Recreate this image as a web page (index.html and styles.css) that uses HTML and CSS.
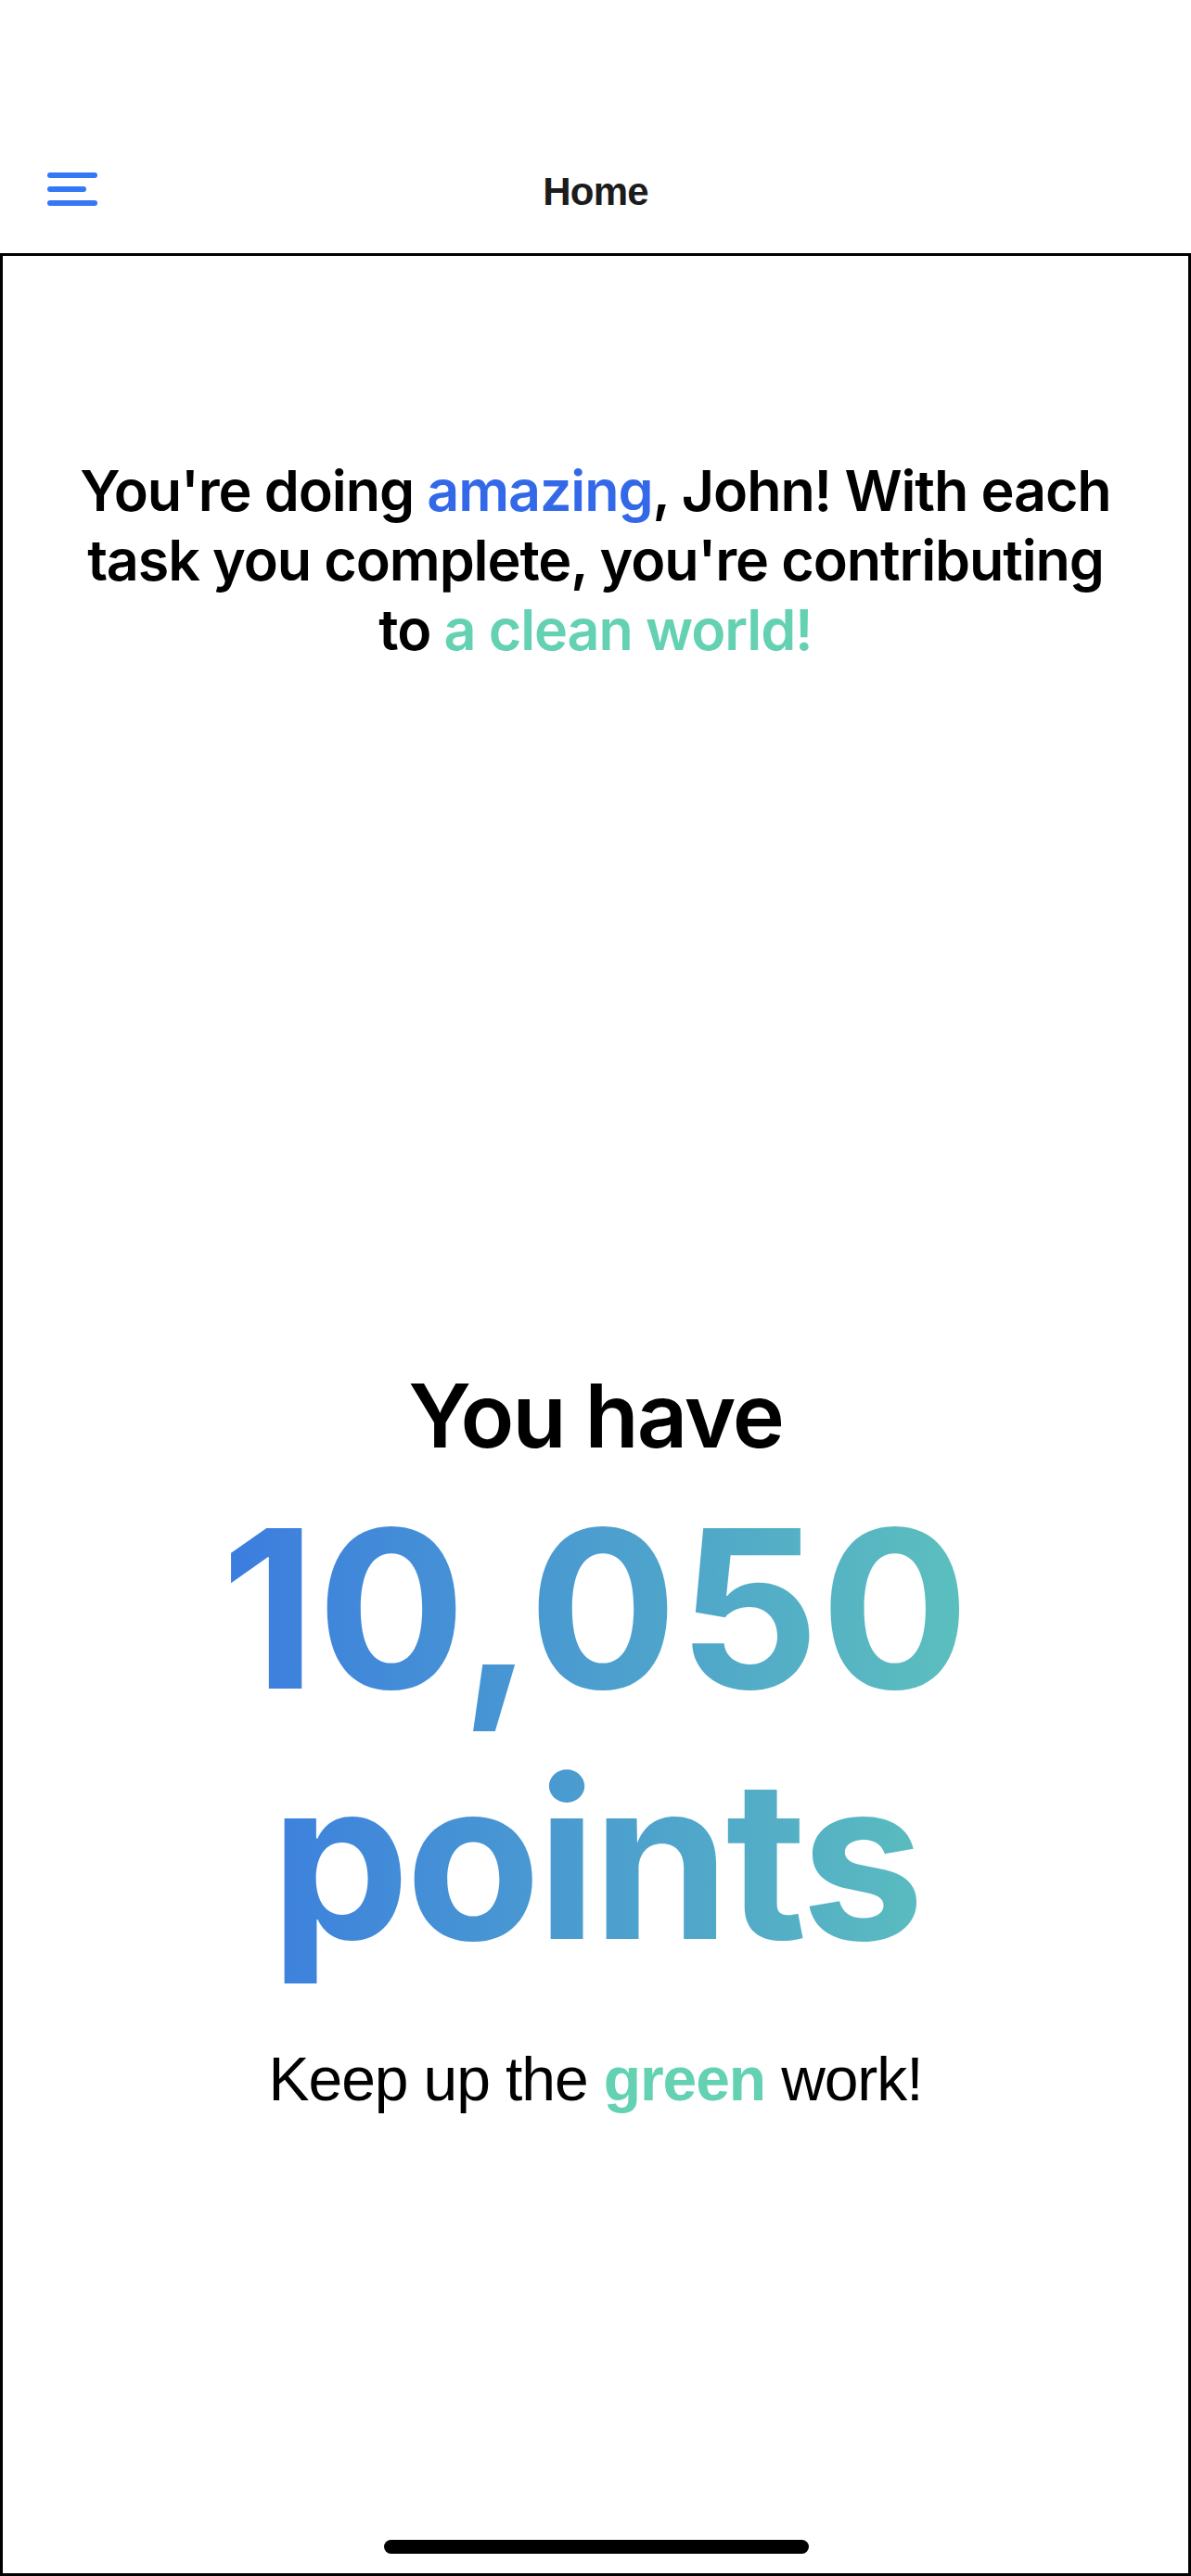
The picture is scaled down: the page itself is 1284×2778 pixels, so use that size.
FILE: index.html
```html
<!DOCTYPE html>
<html lang="en">
<head>
<meta charset="utf-8">
<title>Home</title>
<link rel="stylesheet" href="styles.css">
</head>
<body>
<header class="topbar">
  <nav class="nav">
    <button class="menu-btn" aria-label="Menu">
      <svg width="54" height="36" viewBox="0 0 54 36">
        <line x1="3" y1="3" x2="51" y2="3" stroke="#3478f6" stroke-width="6" stroke-linecap="round"/>
        <line x1="3" y1="18" x2="39" y2="18" stroke="#3478f6" stroke-width="6" stroke-linecap="round"/>
        <line x1="3" y1="33" x2="51" y2="33" stroke="#3478f6" stroke-width="6" stroke-linecap="round"/>
      </svg>
    </button>
    <h1 class="title">Home</h1>
  </nav>
</header>
<main class="screen">
  <p class="cheer">You're doing <span class="blue">amazing</span>, John! With each<br>task you complete, you're contributing<br>to <span class="mint">a clean world!</span></p>
  <section class="points">
    <h2 class="have">You have</h2>
    <div class="big"><span class="big-num">10,050</span><span class="big-word">points</span></div>
    <p class="keep">Keep up the <strong class="mint-b">green</strong> work!</p>
  </section>
  <div class="home-indicator"></div>
</main>
</body>
</html>
```
FILE: styles.css
```css
* { box-sizing: border-box; }
html, body { margin: 0; padding: 0; background: #fff; }
body {
  width: 1284px;
  height: 2778px;
  font-family: Inter, "Noto Sans", sans-serif;
  display: flex;
  flex-direction: column;
}
.topbar {
  height: 273px;
  padding-top: 166px;
}
.nav {
  position: relative;
  height: 82px;
  display: flex;
  align-items: center;
  justify-content: center;
}
.menu-btn {
  position: absolute;
  left: 51px;
  top: 20px;
  border: 0;
  padding: 0;
  background: none;
  display: block;
  line-height: 0;
}
.title {
  margin: 0;
  font-family: "Liberation Sans", Arial, sans-serif;
  font-size: 42px;
  font-weight: 700;
  letter-spacing: -0.8px;
  color: #1c1c1c;
  line-height: 1;
}
.screen {
  flex: 1;
  border: 3px solid #000;
  display: flex;
  flex-direction: column;
  align-items: center;
  position: relative;
}
.cheer {
  margin: 216px 0 0;
  font-size: 61px;
  line-height: 75px;
  font-weight: 600;
  text-align: center;
  color: #000;
  letter-spacing: -1.1px;
}
.blue { color: #3369e8; }
.mint { color: #63d1b2; }
.points {
  margin-top: 753px;
  display: flex;
  flex-direction: column;
  align-items: center;
}
.have {
  margin: 0;
  font-size: 95px;
  line-height: 114px;
  font-weight: 600;
  color: #000;
  letter-spacing: -2px;
}
.big {
  margin-top: 15px;
  display: flex;
  flex-direction: column;
  align-items: center;
  font-size: 238px;
  line-height: 270px;
  font-weight: 700;
  background: linear-gradient(90deg, #3b7ce0 0%, #5cc0bd 100%);
  -webkit-background-clip: text;
  background-clip: text;
  color: transparent;
}
.big-num { letter-spacing: 1px; }
.big-word { letter-spacing: -4.5px; }
.keep {
  margin: 63px 0 0;
  font-family: "Liberation Sans", Arial, sans-serif;
  font-size: 66px;
  line-height: 80px;
  letter-spacing: -1.1px;
  color: #000;
}
.mint-b { color: #63d1b2; font-weight: 700; }
.home-indicator {
  position: absolute;
  left: 411px;
  bottom: 21px;
  width: 458px;
  height: 15px;
  border-radius: 8px;
  background: #000;
}
```
